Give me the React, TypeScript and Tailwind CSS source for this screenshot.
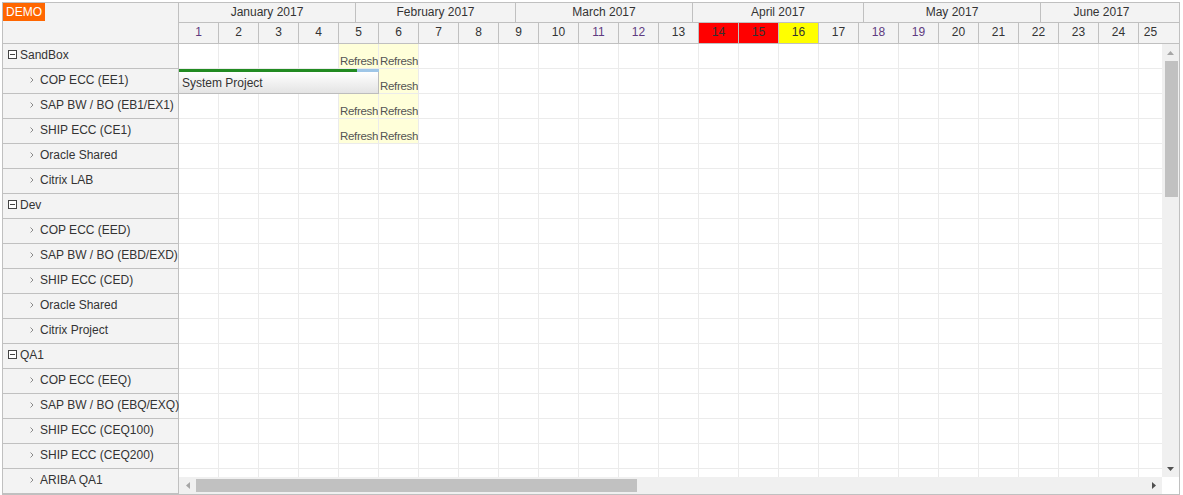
import React from "react";

type Row = { label: string; group?: boolean };

const rows: Row[] = [
  { label: "SandBox", group: true },
  { label: "COP ECC (EE1)" },
  { label: "SAP BW / BO (EB1/EX1)" },
  { label: "SHIP ECC (CE1)" },
  { label: "Oracle Shared" },
  { label: "Citrix LAB" },
  { label: "Dev", group: true },
  { label: "COP ECC (EED)" },
  { label: "SAP BW / BO (EBD/EXD)" },
  { label: "SHIP ECC (CED)" },
  { label: "Oracle Shared" },
  { label: "Citrix Project" },
  { label: "QA1", group: true },
  { label: "COP ECC (EEQ)" },
  { label: "SAP BW / BO (EBQ/EXQ)" },
  { label: "SHIP ECC (CEQ100)" },
  { label: "SHIP ECC (CEQ200)" },
  { label: "ARIBA QA1" },
];

const months = [
  { name: "January 2017", w: "w-[177px]" },
  { name: "February 2017", w: "w-[160px]" },
  { name: "March 2017", w: "w-[177px]" },
  { name: "April 2017", w: "w-[171px]" },
  { name: "May 2017", w: "w-[177px]" },
  { name: "June 2017", w: "flex-1 pr-[17px]" },
];

const days = Array.from({ length: 25 }, (_, i) => i + 1);
const purpleDays = [1, 11, 12, 18, 19];

// cells flagged for a refresh window (row index - day index)
const refresh = new Set(["0-4", "0-5", "1-5", "2-4", "2-5", "3-4", "3-5"]);

function MinusBox() {
  return (
    <svg width="9" height="9" viewBox="0 0 9 9" className="shrink-0">
      <rect x="0.5" y="0.5" width="8" height="8" fill="#fff" stroke="#444" />
      <path d="M2 4.5h5" stroke="#444" />
    </svg>
  );
}

function Chevron() {
  return (
    <svg width="4" height="6" viewBox="0 0 4 6" className="shrink-0">
      <path d="M0.5 0.5l2.5 2.5-2.5 2.5" fill="none" stroke="#8a8a8a" />
    </svg>
  );
}

function Arrow({ dir, dark }: { dir: "up" | "down" | "left" | "right"; dark?: boolean }) {
  const fill = dark ? "#505050" : "#a6a6a6";
  const d = {
    up: "M0 4L3.5 0L7 4Z",
    down: "M0 0L7 0L3.5 4Z",
    left: "M4 0L4 7L0 3.5Z",
    right: "M0 0L4 3.5L0 7Z",
  }[dir];
  const vertical = dir === "up" || dir === "down";
  return (
    <svg width={vertical ? 7 : 4} height={vertical ? 4 : 7} viewBox={vertical ? "0 0 7 4" : "0 0 4 7"}>
      <path d={d} fill={fill} />
    </svg>
  );
}

export default function App() {
  return (
    <div className="w-[1183px] h-[495px] bg-white pl-[2px] pt-[2px] font-['Liberation_Sans',Arial,sans-serif] text-[12px] text-[#333]">
      <div className="w-[1178px] h-[493px] border border-[#c0c0c0] flex overflow-hidden">
        {/* resource tree */}
        <div className="w-[176px] shrink-0 flex flex-col border-r border-[#c0c0c0] bg-[#f3f3f3]">
          <div className="h-[41px] shrink-0 border-b border-[#c0c0c0]">
            <div className="inline-block bg-[#ff6600] text-white text-[12px] leading-[18px] px-[3px]">DEMO</div>
          </div>
          {rows.map((r, i) => (
            <div
              key={i}
              className={`h-[25px] shrink-0 flex items-center border-b border-[#c0c0c0] pb-[3px] whitespace-nowrap ${
                r.group ? "pl-[5px] gap-[3px]" : "pl-[27px] gap-[6px]"
              }`}
            >
              {r.group ? <MinusBox /> : <Chevron />}
              <span>{r.label}</span>
            </div>
          ))}
        </div>

        {/* timeline */}
        <div className="flex-1 flex flex-col min-w-0">
          <div className="h-[20px] shrink-0 flex bg-[#f3f3f3] border-b border-[#c0c0c0]">
            {months.map((m) => (
              <div
                key={m.name}
                className={`${m.w} shrink-0 flex items-center justify-center pb-[2px] border-r border-[#c0c0c0] last:border-r-0 whitespace-nowrap`}
              >
                {m.name}
              </div>
            ))}
          </div>
          <div className="h-[21px] shrink-0 flex bg-[#f3f3f3] border-b border-[#c0c0c0]">
            {days.map((d) => (
              <div
                key={d}
                className={`w-[40px] shrink-0 flex items-center justify-center pb-[2px] border-r border-[#c0c0c0] ${
                  d === 14 || d === 15 ? "bg-[#ff0000]" : d === 16 ? "bg-[#ffff00]" : ""
                } ${purpleDays.includes(d) ? "text-[#5e3a80]" : ""} ${d === 25 ? "pr-[17px] border-r-0" : ""}`}
              >
                {d}
              </div>
            ))}
          </div>

          <div className="flex-1 flex min-h-0">
            <div className="flex-1 flex flex-col min-w-0">
              <div className="flex-1 relative overflow-hidden bg-white">
                {rows.map((_, ri) => (
                  <div key={ri} className="h-[25px] flex">
                    {days.map((d, ci) => {
                      const on = refresh.has(`${ri}-${ci}`);
                      return (
                        <div
                          key={d}
                          className={`w-[40px] shrink-0 border-r border-b border-[#ebebeb] flex items-end overflow-hidden ${
                            on ? "bg-[#ffffd9]" : ""
                          }`}
                        >
                          {on && (
                            <span className="text-[11.5px] tracking-[-0.3px] leading-[14px] text-[#555] pl-[1px] whitespace-nowrap">
                              Refresh
                            </span>
                          )}
                        </div>
                      );
                    })}
                  </div>
                ))}

                {/* event bar */}
                <div className="absolute left-0 top-[25px] w-[200px] h-[25px] flex flex-col">
                  <div className="h-[3px] flex shrink-0">
                    <div className="w-[178px] bg-[#228b22]" />
                    <div className="flex-1 bg-[#9fc6e7]" />
                  </div>
                  <div className="flex-1 flex items-center pl-[3px] border-r border-b border-[#bdbdbd] bg-gradient-to-b from-white to-[#e4e4e4] text-[#333] whitespace-nowrap">
                    System Project
                  </div>
                </div>
              </div>

              {/* horizontal scrollbar */}
              <div className="h-[17px] shrink-0 bg-[#f0f0f0] flex items-center">
                <div className="w-[17px] h-full flex items-center justify-center">
                  <Arrow dir="left" />
                </div>
                <div className="w-[441px] h-[13px] bg-[#c1c1c1]" />
                <div className="flex-1" />
                <div className="w-[17px] h-full flex items-center justify-center">
                  <Arrow dir="right" dark />
                </div>
              </div>
            </div>

            {/* vertical scrollbar */}
            <div className="w-[17px] shrink-0 flex flex-col">
              <div className="flex-1 bg-[#f0f0f0] flex flex-col items-center">
                <div className="h-[17px] w-full flex items-center justify-center">
                  <Arrow dir="up" />
                </div>
                <div className="w-[13px] h-[136px] bg-[#c1c1c1] ml-[1px]" />
                <div className="flex-1" />
                <div className="h-[17px] w-full flex items-center justify-center">
                  <Arrow dir="down" dark />
                </div>
              </div>
              <div className="h-[17px] shrink-0 bg-white" />
            </div>
          </div>
        </div>
      </div>
    </div>
  );
}
